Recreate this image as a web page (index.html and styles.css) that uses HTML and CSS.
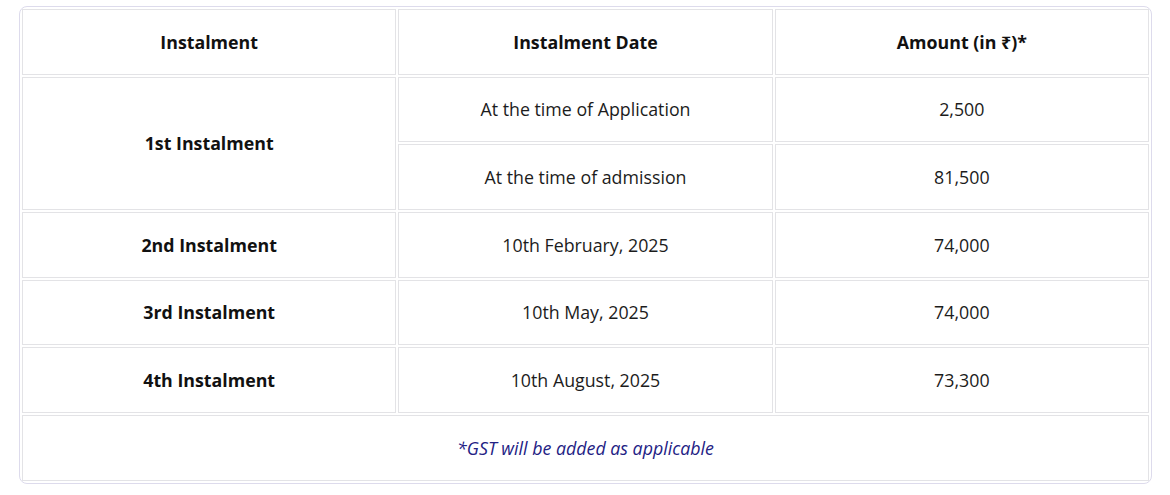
FILE: index.html
```html
<!DOCTYPE html>
<html lang="en">
<head>
<meta charset="utf-8">
<title>Instalment Schedule</title>
<link rel="stylesheet" href="styles.css">
</head>
<body>
<div class="fee-card">
  <table class="fee-table">
    <thead>
      <tr>
        <th>Instalment</th>
        <th>Instalment Date</th>
        <th>Amount (in ₹)*</th>
      </tr>
    </thead>
    <tbody>
      <tr>
        <td class="label" rowspan="2">1st Instalment</td>
        <td>At the time of Application</td>
        <td>2,500</td>
      </tr>
      <tr>
        <td>At the time of admission</td>
        <td>81,500</td>
      </tr>
      <tr>
        <td class="label">2nd Instalment</td>
        <td>10th February, 2025</td>
        <td>74,000</td>
      </tr>
      <tr>
        <td class="label">3rd Instalment</td>
        <td>10th May, 2025</td>
        <td>74,000</td>
      </tr>
      <tr>
        <td class="label">4th Instalment</td>
        <td>10th August, 2025</td>
        <td>73,300</td>
      </tr>
      <tr>
        <td class="note" colspan="3">*GST will be added as applicable</td>
      </tr>
    </tbody>
  </table>
</div>
</body>
</html>
```

FILE: styles.css
```css
html, body {
  margin: 0;
  padding: 0;
  background: #ffffff;
}

body {
  font-family: "Open Sans", "Noto Sans", sans-serif;
  color: #1c1c1c;
  font-size: 17.8px;
}

.fee-card {
  margin: 6px 18px 0 19px;
  border: 1px solid #dddbec;
  border-radius: 8px;
  overflow: hidden;
}

.fee-table {
  width: 100%;
  border-collapse: separate;
  border-spacing: 2px;
  table-layout: fixed;
}

.fee-table th,
.fee-table td {
  border: 1px solid #e3e3e6;
  text-align: center;
  vertical-align: middle;
  height: 65.67px;
  padding: 0 10px;
  box-sizing: border-box;
  line-height: 24px;
}

.fee-table th {
  font-weight: 700;
  color: #111111;
}

.fee-table td.label {
  font-weight: 700;
  color: #111111;
}

.fee-table td.note {
  font-style: italic;
  color: #232184;
}
```
